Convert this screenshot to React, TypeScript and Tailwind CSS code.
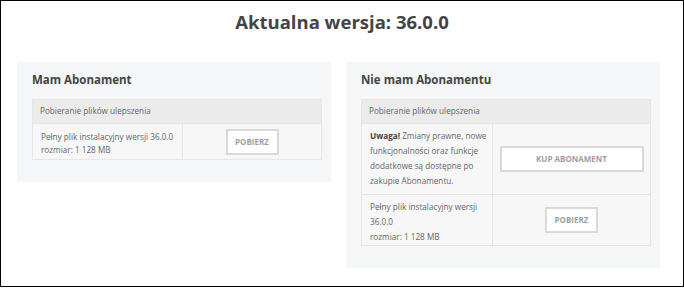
import React from "react";

const font = { fontFamily: '"Open Sans", "Noto Sans", sans-serif' };

function Btn({ children, className }: { children: React.ReactNode; className: string }) {
  return (
    <button
      className={`border-2 border-[#d9d9d9] bg-white text-[#a0a0a0] font-bold text-[8px] ${className}`}
    >
      {children}
    </button>
  );
}

export default function App() {
  return (
    <div style={font} className="w-[684px] h-[287px] border border-black bg-white text-[#666] overflow-hidden">
      <h1 className="text-center text-[18.5px] font-bold text-[#444] leading-[26px] mt-[8px]">
        Aktualna wersja: 36.0.0
      </h1>
      <div className="flex items-start gap-[15px] mt-[27px] ml-[16px]">
        {/* Left card */}
        <div className="w-[314px] bg-[#f5f6f7] pl-[15px] pr-[9px] pt-[9px] pb-[22px]">
          <h2 className="text-[11.5px] font-bold text-[#444] leading-[18px]">Mam Abonament</h2>
          <div className="mt-[10px] border border-[#e6e6e6] text-[8.2px]">
            <div className="bg-[#ebebeb] h-[23px] flex items-center px-[7px]">Pobieranie plików ulepszenia</div>
            <div className="flex bg-[#f7f7f7] border-t border-[#e6e6e6] h-[36px]">
              <div className="w-[150px] border-r border-[#e6e6e6] pl-[8px] pr-[2px] pt-[6px] leading-[13px]">
                <div>Pełny plik instalacyjny wersji 36.0.0</div>
                <div>rozmiar: 1 128 MB</div>
              </div>
              <div className="flex-1 flex items-center justify-center">
                <Btn className="w-[53px] h-[26px]">POBIERZ</Btn>
              </div>
            </div>
          </div>
        </div>
        {/* Right card */}
        <div className="w-[314px] bg-[#f5f6f7] pl-[15px] pr-[9px] pt-[9px] pb-[22px]">
          <h2 className="text-[11.5px] font-bold text-[#444] leading-[18px]">Nie mam Abonamentu</h2>
          <div className="mt-[10px] border border-[#e6e6e6] text-[8.2px]">
            <div className="bg-[#ebebeb] h-[23px] flex items-center px-[7px]">Pobieranie plików ulepszenia</div>
            <div className="flex bg-[#f7f7f7] border-t border-[#e6e6e6] h-[71px]">
              <div className="w-[131px] border-r border-[#e6e6e6] pl-[8px] pr-[4px] pt-[4px] leading-[15px]">
                <b className="text-[#444]">Uwaga!</b> Zmiany prawne, nowe funkcjonalności oraz funkcje dodatkowe są dostępne po zakupie Abonamentu.
              </div>
              <div className="flex-1 flex items-center justify-center">
                <Btn className="w-[144px] h-[26px]">KUP ABONAMENT</Btn>
              </div>
            </div>
            <div className="flex bg-[#f7f7f7] border-t border-[#e6e6e6] h-[51px]">
              <div className="w-[131px] border-r border-[#e6e6e6] pl-[8px] pr-[4px] pt-[4px] leading-[15px]">
                <div>Pełny plik instalacyjny wersji 36.0.0</div>
                <div>rozmiar: 1 128 MB</div>
              </div>
              <div className="flex-1 flex items-center justify-center">
                <Btn className="w-[53px] h-[26px]">POBIERZ</Btn>
              </div>
            </div>
          </div>
        </div>
      </div>
    </div>
  );
}
